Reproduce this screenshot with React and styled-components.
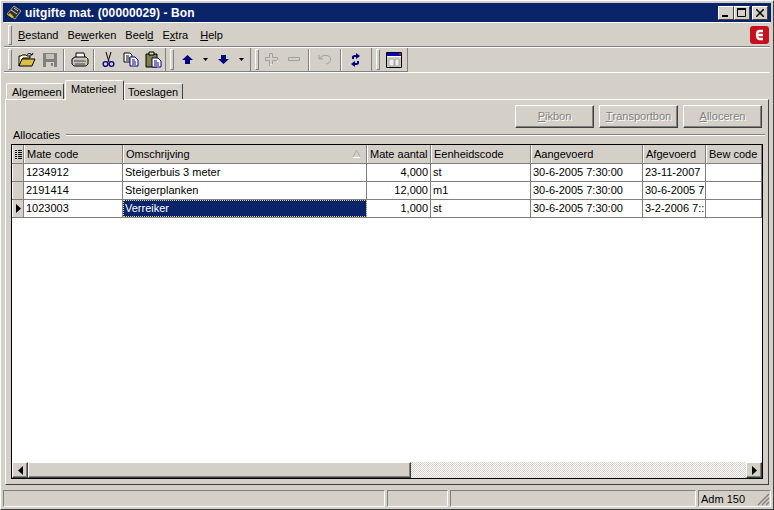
import React from 'react';
import styled, { createGlobalStyle } from 'styled-components';

const Global = createGlobalStyle`
  html, body { margin: 0; padding: 0; background: #d4d0c8; }
  * { box-sizing: border-box; }
`;

const Window = styled.div`
  width: 774px;
  height: 510px;
  overflow: hidden;
  display: flex;
  flex-direction: column;
  padding: 3px 3px 2px;
  background: #d4d0c8;
  border-top: 1px solid #fff;
  border-left: 1px solid #fff;
  border-right: 1px solid #404040;
  border-bottom: 1px solid #404040;
  font-family: "Liberation Sans", sans-serif;
  font-size: 11px;
  color: #000;
`;

const TitleBar = styled.div`
  height: 19px;
  flex: none;
  margin: -1px -1px 0 -1px;
  display: flex;
  align-items: center;
  padding: 0 3px 0 3px;
  background: #0a246a;
  color: #fff;
  font-weight: 700;
  font-size: 12px;
  letter-spacing: 0.1px;
`;

const TitleText = styled.span`
  margin-left: 3px;
  flex: 1;
`;

const CaptionButton = styled.div`
  width: 16px;
  height: 14px;
  margin-left: ${p => (p.$gap ? 2 : 0)}px;
  display: flex;
  align-items: center;
  justify-content: center;
  background: #d4d0c8;
  border: 1px solid;
  border-color: #fff #404040 #404040 #fff;
`;

const MenuBand = styled.div`
  height: 25px;
  flex: none;
  display: flex;
  align-items: center;
  padding: 0 1px 0 4px;
  border-top: 1px solid #fff;
  border-bottom: 1px solid #808080;
`;

const Grip = styled.div`
  width: 4px;
  height: ${p => p.$h || 20}px;
  flex: none;
  background: #d4d0c8;
  border: 1px solid;
  border-color: #fff #808080 #808080 #fff;
`;

const MenuItem = styled.span`
  margin-left: ${p => p.$left}px;
`;

const Spacer = styled.div`
  flex: 1;
`;

const ToolRow = styled.div`
  height: 26px;
  flex: none;
  display: flex;
  border-top: 1px solid #fff;
  border-bottom: 1px solid #fff;
`;

const ToolBand = styled.div`
  width: ${p => p.$w}px;
  flex: none;
  display: flex;
  align-items: center;
  padding-left: 4px;
  border-right: 1px solid #808080;
  border-bottom: 1px solid #808080;
`;

const ToolSlot = styled.div`
  width: ${p => p.$w}px;
  margin-left: ${p => p.$left || 0}px;
  flex: none;
  display: flex;
  align-items: center;
  justify-content: center;
`;

const ToolSep = styled.div`
  width: 2px;
  height: 22px;
  margin-left: ${p => p.$left}px;
  flex: none;
  border-left: 1px solid #808080;
  border-right: 1px solid #fff;
`;

const TabStrip = styled.div`
  height: 26px;
  flex: none;
  padding: 6px 0 0 2px;
  display: flex;
  align-items: flex-end;
  position: relative;
  z-index: 1;
`;

const Tab = styled.div`
  width: ${p => p.$w}px;
  height: ${p => (p.$active ? 20 : 16)}px;
  margin-right: ${p => (p.$active ? 0 : 1)}px;
  margin-bottom: ${p => (p.$active ? -1 : 0)}px;
  padding-top: 2px;
  padding-left: ${p => p.$indent}px;
  background: #d4d0c8;
  border-top: 1px solid #fff;
  border-left: 1px solid #fff;
  border-right: 1px solid #404040;
  border-radius: 2px 2px 0 0;
`;

const Pane = styled.div`
  flex: 1;
  min-height: 0;
  margin: 0 1px 5px 1px;
  display: flex;
  flex-direction: column;
  padding: 5px;
  border: 1px solid;
  border-color: #fff #404040 #404040 #fff;
`;

const ButtonRow = styled.div`
  display: flex;
  justify-content: flex-end;
  gap: 5px;
  height: 23px;
  flex: none;
  padding-right: 1px;
`;

const PlainButton = styled.div`
  width: 79px;
  height: 23px;
  padding-bottom: 2px;
  display: flex;
  align-items: center;
  justify-content: center;
  border: 1px solid;
  border-color: #fff #404040 #404040 #fff;
  box-shadow: inset -1px -1px 0 #808080;
  color: #808080;
  text-shadow: 1px 1px 0 #fff;
`;

const GroupLabel = styled.div`
  height: 13px;
  margin: 0 0 3px;
  flex: none;
  display: flex;
  align-items: center;
  gap: 6px;
  padding-left: 2px;
`;

const GroupLine = styled.div`
  flex: 1;
  height: 2px;
  margin-right: -2px;
  border-top: 1px solid #808080;
  border-bottom: 1px solid #fff;
`;

const Grid = styled.div`
  flex: 1;
  min-height: 0;
  display: flex;
  flex-direction: column;
  background: #fff;
  border: 1px solid #000;
`;

const columns = '12px 99px 244px 64px 100px 112px 63px 1fr';

const Row = styled.div`
  display: grid;
  grid-template-columns: ${columns};
  height: ${p => (p.$head ? 19 : 18)}px;
  flex: none;
  background: ${p => (p.$head ? '#d4d0c8' : '#fff')};
  border-bottom: 1px solid #808080;
`;

const HeadCell = styled.div`
  display: flex;
  align-items: center;
  padding-left: 2px;
  overflow: hidden;
  white-space: nowrap;
  border-left: 1px solid #fff;
  border-right: 1px solid #808080;
`;

const SortMark = styled.span`
  margin-left: auto;
  margin-right: 5px;
  display: flex;
`;

const Cell = styled.div`
  display: flex;
  align-items: center;
  justify-content: ${p => (p.$right ? 'flex-end' : 'flex-start')};
  padding: 0 ${p => (p.$right ? 2 : 0)}px 2px 2px;
  overflow: hidden;
  white-space: nowrap;
  border-right: 1px solid #808080;
  background: ${p => (p.$selected ? '#0a246a' : 'transparent')};
  color: ${p => (p.$selected ? '#fff' : '#000')};
  outline: ${p => (p.$selected ? '1px dotted #e8d98a' : 'none')};
  outline-offset: -1px;
`;

const RowHeader = styled.div`
  display: flex;
  align-items: center;
  justify-content: center;
  background: #d4d0c8;
  border-right: 1px solid #808080;
  border-left: 1px solid #fff;
`;

const GridBody = styled.div`
  flex: 1;
`;

const ScrollBar = styled.div`
  height: 16px;
  flex: none;
  display: flex;
`;

const ScrollButton = styled.div`
  width: 16px;
  flex: none;
  display: flex;
  align-items: center;
  justify-content: center;
  background: #d4d0c8;
  border: 1px solid;
  border-color: #fff #404040 #404040 #fff;
  box-shadow: inset -1px -1px 0 #808080;
`;

const ScrollThumb = styled(ScrollButton)`
  width: 383px;
`;

const ScrollTrack = styled.div`
  flex: 1;
  background: repeating-conic-gradient(#d4d0c8 0 25%, #fff 0 50%) 0 0 / 2px 2px;
`;

const StatusBar = styled.div`
  height: 17px;
  flex: none;
  margin: 0 -1px;
  display: grid;
  grid-template-columns: 382px 61px 246px 1fr;
  gap: 2px;
`;

const StatusPanel = styled.div`
  display: flex;
  align-items: center;
  padding-left: 2px;
  position: relative;
  border: 1px solid;
  border-color: #808080 #fff #fff #808080;
`;

const ResizeGrip = styled.svg`
  position: absolute;
  right: 0;
  bottom: 0;
`;

const Open = () => (
  <svg width="18" height="16" viewBox="0 0 18 16">
    <path d="M1 4h2l1-1h4l1 1h3v2H5L1 14z" fill="#fff8c0" stroke="#000" />
    <path d="M1 14l3-7h13l-3 7z" fill="#e0c040" stroke="#000" />
    <path d="M9 3c1-2 4-2 5 0M14 3l1-2M14 3l-2 0" fill="none" stroke="#000" />
  </svg>
);

const Save = () => (
  <svg width="16" height="16" viewBox="0 0 16 16">
    <path d="M1 1h14v14H1z" fill="#808080" />
    <path d="M4 2h8v5H4z" fill="#c4c0b8" />
    <path d="M4 10h8v5H4z" fill="#d4d0c8" />
    <path d="M9 11h2v3H9z" fill="#808080" />
  </svg>
);

const Print = () => (
  <svg width="18" height="16" viewBox="0 0 18 16">
    <path d="M5 1h8l1 5H5z" fill="#fff" stroke="#000" />
    <path d="M1 7l3-2h11l2 2v5l-2 2H3l-2-2z" fill="#c8c4bc" stroke="#000" />
    <path d="M3 9h12M4 12h10" stroke="#404040" />
    <path d="M13 8h2" stroke="#e0e000" />
  </svg>
);

const Cut = () => (
  <svg width="13" height="17" viewBox="0 0 13 17">
    <path d="M4 1l3 10M9 1L6 11" stroke="#000" fill="none" />
    <circle cx="3.5" cy="13" r="2.4" fill="none" stroke="#000080" strokeWidth="1.3" />
    <circle cx="9.5" cy="13" r="2.4" fill="none" stroke="#000080" strokeWidth="1.3" />
  </svg>
);

const Copy = () => (
  <svg width="16" height="15" viewBox="0 0 16 15">
    <path d="M1 1h6l2 2v7H1z" fill="#fff" stroke="#000" />
    <path d="M3 4h3M3 6h4M3 8h4" stroke="#000" />
    <path d="M7 5h5l3 3v6H7z" fill="#fff" stroke="#000080" />
    <path d="M9 8h3M9 10h4M9 12h4" stroke="#000080" />
  </svg>
);

const Paste = () => (
  <svg width="17" height="17" viewBox="0 0 17 17">
    <path d="M1 3h11v13H1z" fill="#808040" stroke="#000" />
    <path d="M4 1h5v3H4z" fill="#d4d0c8" stroke="#000" />
    <path d="M7 7h6l3 3v6H7z" fill="#fff" stroke="#000080" />
    <path d="M9 10h3M9 12h5M9 14h5" stroke="#000080" />
  </svg>
);

const ArrowUp = () => (
  <svg width="11" height="9" viewBox="0 0 11 9">
    <path d="M5.5 0L11 5H8v4H3V5H0z" fill="#000080" />
  </svg>
);

const ArrowDown = () => (
  <svg width="11" height="9" viewBox="0 0 11 9">
    <path d="M5.5 9L11 4H8V0H3v4H0z" fill="#000080" />
  </svg>
);

const Caret = () => (
  <svg width="5" height="3" viewBox="0 0 5 3">
    <path d="M0 0h5L2.5 3z" fill="#000" />
  </svg>
);

const Plus = () => (
  <svg width="13" height="13" viewBox="0 0 13 13">
    <path d="M4.5.5h3v4h5v3h-5v5h-3v-5h-4v-3h4z" fill="#d4d0c8" stroke="#a0a0a0" />
    <path d="M5 12h3M12 8h1" stroke="#fff" />
  </svg>
);

const Minus = () => (
  <svg width="13" height="5" viewBox="0 0 13 5">
    <path d="M.5.5h11v3H.5z" fill="#d4d0c8" stroke="#a0a0a0" />
  </svg>
);

const Undo = () => (
  <svg width="14" height="11" viewBox="0 0 14 11">
    <path d="M1 1v4h4M1.5 5C3 2 6 1 9 1.500c3 .5 4 3 3.500 5S10 10 8 10" fill="none" stroke="#a0a0a0" />
  </svg>
);

const Refresh = () => (
  <svg width="9" height="14" viewBox="0 0 9 14">
    <path d="M1 6V4c0-1 1-2 3-2h1V0l4 3-4 3V4H3v2z" fill="#000080" />
    <path d="M8 8v2c0 1-1 2-3 2H4v2L0 11l4-3v2h2V8z" fill="#000080" />
  </svg>
);

const WindowIcon = () => (
  <svg width="16" height="16" viewBox="0 0 16 16">
    <path d="M.5.5h15v15H.5z" fill="#d4d0c8" stroke="#000" />
    <path d="M1 1h14v3H1z" fill="#0000c0" />
    <path d="M13 1h2v2h-2z" fill="#e00000" />
    <path d="M1 4.500h14" stroke="#fff" />
    <path d="M3 7h5v7H3zM9 7h4v7H9z" fill="#eeeeee" stroke="#808080" strokeWidth="0.6" />
  </svg>
);

const AppIcon = () => (
  <svg width="16" height="15" viewBox="0 0 16 15">
    <path d="M1 9l7-8 7 5-6 8z" fill="#303030" stroke="#a0a0a0" />
    <path d="M5 5l6 4M8 3l4 3" stroke="#d0d0d0" />
    <path d="M2 10l4 3 2-1-4-4z" fill="#e0c000" />
  </svg>
);

const Logo = () => (
  <svg width="19" height="18" viewBox="0 0 19 18">
    <rect width="19" height="18" rx="3" fill="#c8101c" />
    <path d="M13 5H9.500C8 5 7 6 7 9s1 4 2.500 4H13M7.500 9H13" fill="none" stroke="#fff" strokeWidth="2.400" />
  </svg>
);

const SortTriangle = () => (
  <svg width="9" height="8" viewBox="0 0 9 8">
    <path d="M4.500.5L8.500 7.500H.5z" fill="#d4d0c8" stroke="#a8a8a8" />
    <path d="M8.500 7.500H.5" stroke="#fff" />
  </svg>
);

const RowsIcon = () => (
  <svg width="7" height="9" viewBox="0 0 7 9">
    <path d="M0 .5h2M3 .5h4M0 2.500h2M3 2.500h4M0 4.500h2M3 4.500h4M0 6.500h2M3 6.500h4M0 8.500h2M3 8.500h4" stroke="#000" />
  </svg>
);

const Pointer = ({ left }) => (
  <svg width="5" height="9" viewBox="0 0 5 9">
    <path d={left ? 'M5 0v9L0 4.500z' : 'M0 0v9L5 4.500z'} fill="#000" />
  </svg>
);

const rows = [
  { code: '1234912', name: 'Steigerbuis 3 meter', qty: '4,000', unit: 'st', from: '30-6-2005 7:30:00', to: '23-11-2007' },
  { code: '2191414', name: 'Steigerplanken', qty: '12,000', unit: 'm1', from: '30-6-2005 7:30:00', to: '30-6-2005 7' },
  { code: '1023003', name: 'Verreiker', qty: '1,000', unit: 'st', from: '30-6-2005 7:30:00', to: '3-2-2006 7::', current: true },
];

export default function App() {
  return (
    <>
      <Global />
      <Window>
        <TitleBar>
          <AppIcon />
          <TitleText>uitgifte mat. (00000029) - Bon</TitleText>
          <CaptionButton>
            <svg width="8" height="9" viewBox="0 0 8 9"><path d="M0 7h6v2H0z" fill="#000" /></svg>
          </CaptionButton>
          <CaptionButton>
            <svg width="10" height="9" viewBox="0 0 10 9"><path d="M.5 1.500h8v7h-8z" fill="none" stroke="#000" /><path d="M0 0h9v2H0z" fill="#000" /></svg>
          </CaptionButton>
          <CaptionButton $gap>
            <svg width="8" height="8" viewBox="0 0 8 8"><path d="M0 0l8 8M8 0L0 8" stroke="#000" strokeWidth="1.500" /></svg>
          </CaptionButton>
        </TitleBar>

        <MenuBand>
          <Grip />
          <MenuItem $left={6}><u>B</u>estand</MenuItem>
          <MenuItem $left={9}>Be<u>w</u>erken</MenuItem>
          <MenuItem $left={9}>Beel<u>d</u></MenuItem>
          <MenuItem $left={9}>E<u>x</u>tra</MenuItem>
          <MenuItem $left={12}><u>H</u>elp</MenuItem>
          <Spacer />
          <Logo />
        </MenuBand>

        <ToolRow>
          <ToolBand $w={162}>
            <Grip $h={21} />
            <ToolSlot $w={23} $left={3}><Open /></ToolSlot>
            <ToolSlot $w={23}><Save /></ToolSlot>
            <ToolSep $left={2} />
            <ToolSlot $w={24} $left={3}><Print /></ToolSlot>
            <ToolSep $left={1} />
            <ToolSlot $w={22} $left={2}><Cut /></ToolSlot>
            <ToolSlot $w={23}><Copy /></ToolSlot>
            <ToolSlot $w={23}><Paste /></ToolSlot>
          </ToolBand>
          <ToolBand $w={85}>
            <Grip $h={21} />
            <ToolSlot $w={22} $left={2}><ArrowUp /></ToolSlot>
            <ToolSlot $w={14}><Caret /></ToolSlot>
            <ToolSlot $w={22}><ArrowDown /></ToolSlot>
            <ToolSlot $w={14}><Caret /></ToolSlot>
          </ToolBand>
          <ToolBand $w={121}>
            <Grip $h={21} />
            <ToolSlot $w={23} $left={1}><Plus /></ToolSlot>
            <ToolSlot $w={23}><Minus /></ToolSlot>
            <ToolSep $left={2} />
            <ToolSlot $w={24} $left={3}><Undo /></ToolSlot>
            <ToolSep $left={3} />
            <ToolSlot $w={22} $left={2}><Refresh /></ToolSlot>
          </ToolBand>
          <ToolBand $w={36}>
            <Grip $h={21} />
            <ToolSlot $w={24} $left={2}><WindowIcon /></ToolSlot>
          </ToolBand>
        </ToolRow>

        <TabStrip>
          <Tab $w={58} $indent={5}>Algemeen</Tab>
          <Tab $w={59} $indent={5} $active>Materieel</Tab>
          <Tab $w={59} $indent={3}>Toeslagen</Tab>
        </TabStrip>

        <Pane>
          <ButtonRow>
            <PlainButton><u>P</u>ikbon</PlainButton>
            <PlainButton><u>T</u>ransportbon</PlainButton>
            <PlainButton><u>A</u>lloceren</PlainButton>
          </ButtonRow>
          <GroupLabel>
            Allocaties
            <GroupLine />
          </GroupLabel>
          <Grid>
            <Row $head>
              <HeadCell><RowsIcon /></HeadCell>
              <HeadCell>Mate code</HeadCell>
              <HeadCell>
                Omschrijving
                <SortMark><SortTriangle /></SortMark>
              </HeadCell>
              <HeadCell>Mate aantal</HeadCell>
              <HeadCell>Eenheidscode</HeadCell>
              <HeadCell>Aangevoerd</HeadCell>
              <HeadCell>Afgevoerd</HeadCell>
              <HeadCell>Bew code</HeadCell>
            </Row>
            {rows.map(row => (
              <Row key={row.code}>
                <RowHeader>{row.current && <Pointer />}</RowHeader>
                <Cell>{row.code}</Cell>
                <Cell $selected={row.current}>{row.name}</Cell>
                <Cell $right>{row.qty}</Cell>
                <Cell>{row.unit}</Cell>
                <Cell>{row.from}</Cell>
                <Cell>{row.to}</Cell>
                <Cell />
              </Row>
            ))}
            <GridBody />
            <ScrollBar>
              <ScrollButton><Pointer left /></ScrollButton>
              <ScrollThumb />
              <ScrollTrack />
              <ScrollButton><Pointer /></ScrollButton>
            </ScrollBar>
          </Grid>
        </Pane>

        <StatusBar>
          <StatusPanel />
          <StatusPanel />
          <StatusPanel />
          <StatusPanel>
            Adm 150
            <ResizeGrip width="13" height="13" viewBox="0 0 13 13">
              <path d="M12 1L1 12M12 5l-7 7M12 9l-3 3" stroke="#808080" strokeWidth="1.400" fill="none" />
            </ResizeGrip>
          </StatusPanel>
        </StatusBar>
      </Window>
    </>
  );
}
